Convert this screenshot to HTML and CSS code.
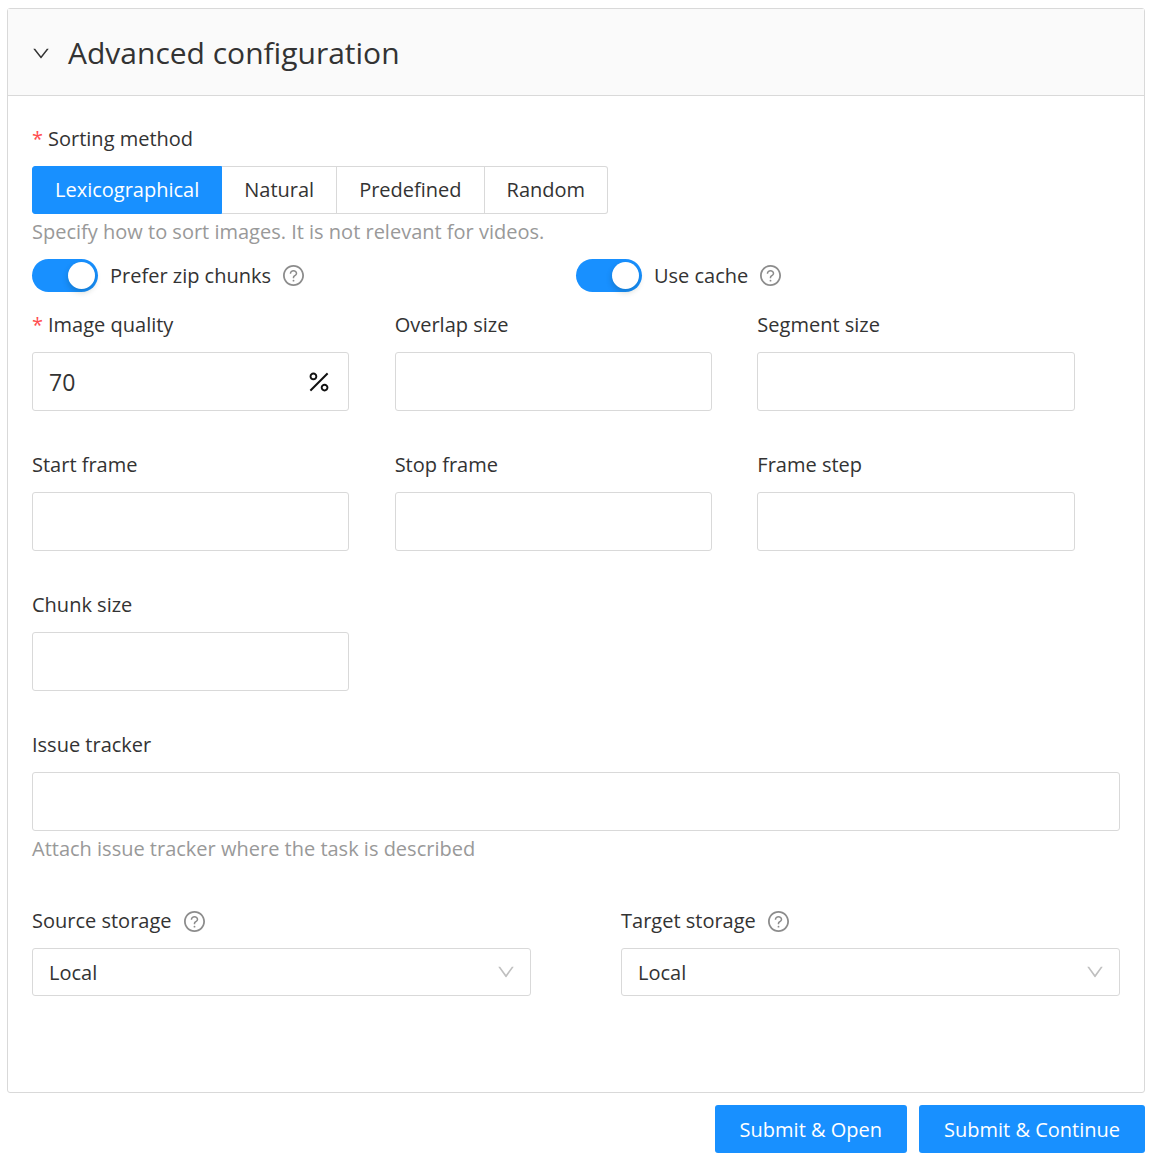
FILE: index.html
```html
<!DOCTYPE html>
<html lang="en">
<head>
<meta charset="utf-8">
<meta name="viewport" content="width=device-width, initial-scale=1">
<title>Advanced configuration</title>
<link rel="stylesheet" href="styles.css">
</head>
<body>
<svg class="sprite" aria-hidden="true">
  <symbol id="down" viewBox="64 64 896 896"><path d="M884 256h-75c-5.100 0-9.900 2.500-12.900 6.600L512 654.200 227.900 262.600c-3-4.100-7.800-6.600-12.900-6.600h-75c-6.500 0-10.300 7.400-6.500 12.700l352.600 486.100c12.800 17.600 39 17.600 51.700 0l352.600-486.100c3.900-5.300.1-12.700-6.400-12.700z"/></symbol>
  <symbol id="right" viewBox="64 64 896 896"><path d="M765.700 486.800L314.900 134.700A7.970 7.970 0 00302 141v77.300c0 4.900 2.300 9.600 6.100 12.600l360 281.100-360 281.100c-3.900 3-6.100 7.700-6.100 12.600V883c0 6.700 7.700 10.400 12.900 6.300l450.800-352.100a31.960 31.960 0 000-50.400z"/></symbol>
  <symbol id="question" viewBox="64 64 896 896"><path d="M512 64C264.600 64 64 264.600 64 512s200.600 448 448 448 448-200.600 448-448S759.400 64 512 64zm0 820c-205.400 0-372-166.600-372-372s166.600-372 372-372 372 166.600 372 372-166.600 372-372 372z"/><path d="M623.600 316.700C593.600 290.400 554 276 512 276s-81.600 14.500-111.600 40.700C369.200 344 352 380.700 352 420v7.600c0 4.400 3.600 8 8 8h48c4.400 0 8-3.600 8-8V420c0-44.100 43.100-80 96-80s96 35.900 96 80c0 31.100-22 59.600-56.100 72.700-21.200 8.100-39.200 22.300-52.100 40.900-13.100 19-19.900 41.800-19.900 64.900V620c0 4.400 3.600 8 8 8h48c4.400 0 8-3.600 8-8v-22.700a48.300 48.300 0 0130.900-44.800c59-22.700 97.100-74.700 97.100-132.500.1-39.300-17.100-76-48.300-103.300zM472 732a40 40 0 1080 0 40 40 0 10-80 0z"/></symbol>
  <symbol id="percent" viewBox="64 64 896 896"><path d="M855.700 210.800l-42.400-42.400a8.030 8.030 0 00-11.300 0L168.300 801.900a8.030 8.030 0 000 11.300l42.400 42.400c3.100 3.100 8.200 3.100 11.300 0L855.600 222c3.200-3 3.200-8.100.1-11.200zM304 448c79.400 0 144-64.600 144-144s-64.600-144-144-144-144 64.600-144 144 64.600 144 144 144zm0-216c39.700 0 72 32.300 72 72s-32.300 72-72 72-72-32.300-72-72 32.300-72 72-72zm416 344c-79.400 0-144 64.600-144 144s64.600 144 144 144 144-64.600 144-144-64.600-144-144-144zm0 216c-39.700 0-72-32.300-72-72s32.300-72 72-72 72 32.300 72 72-32.300 72-72 72z"/></symbol>
</svg>
<form class="page">
  <section class="panel">
    <h2 class="panel-header">
      <button class="panel-toggle" type="button" aria-expanded="true" aria-controls="advanced">
        <svg class="icon icon-caret" aria-hidden="true"><use href="#right"/></svg>
        <span>Advanced configuration</span>
      </button>
    </h2>
    <div class="panel-body" id="advanced">
      <fieldset class="field sorting">
        <legend class="label required">Sorting method</legend>
        <div class="radio-group">
          <label class="radio"><input type="radio" name="sorting" value="lexicographical" checked>Lexicographical</label>
          <label class="radio"><input type="radio" name="sorting" value="natural">Natural</label>
          <label class="radio"><input type="radio" name="sorting" value="predefined">Predefined</label>
          <label class="radio"><input type="radio" name="sorting" value="random">Random</label>
        </div>
        <p class="hint">Specify how to sort images. It is not relevant for videos.</p>
      </fieldset>

      <div class="switches">
        <div class="switch-row">
          <input class="switch" type="checkbox" role="switch" id="zip" checked>
          <label for="zip">Prefer zip chunks</label>
          <svg class="icon icon-help" aria-hidden="true"><use href="#question"/></svg>
        </div>
        <div class="switch-row">
          <input class="switch" type="checkbox" role="switch" id="cache" checked>
          <label for="cache">Use cache</label>
          <svg class="icon icon-help" aria-hidden="true"><use href="#question"/></svg>
        </div>
      </div>

      <div class="fields">
        <div class="field">
          <label class="label required" for="quality">Image quality</label>
          <div class="control">
            <input class="control-input" type="text" inputmode="numeric" id="quality" value="70">
            <svg class="icon icon-percent" aria-hidden="true"><use href="#percent"/></svg>
          </div>
        </div>
        <div class="field">
          <label class="label" for="overlap">Overlap size</label>
          <div class="control"><input class="control-input" type="text" id="overlap"></div>
        </div>
        <div class="field">
          <label class="label" for="segment">Segment size</label>
          <div class="control"><input class="control-input" type="text" id="segment"></div>
        </div>
        <div class="field">
          <label class="label" for="start">Start frame</label>
          <div class="control"><input class="control-input" type="text" id="start"></div>
        </div>
        <div class="field">
          <label class="label" for="stop">Stop frame</label>
          <div class="control"><input class="control-input" type="text" id="stop"></div>
        </div>
        <div class="field">
          <label class="label" for="step">Frame step</label>
          <div class="control"><input class="control-input" type="text" id="step"></div>
        </div>
        <div class="field">
          <label class="label" for="chunk">Chunk size</label>
          <div class="control"><input class="control-input" type="text" id="chunk"></div>
        </div>
      </div>

      <div class="field tracker">
        <label class="label" for="tracker">Issue tracker</label>
        <div class="control"><input class="control-input" type="text" id="tracker"></div>
        <p class="hint">Attach issue tracker where the task is described</p>
      </div>

      <div class="storages">
        <div class="field">
          <div class="label label-help">
            <label for="source">Source storage</label>
            <svg class="icon icon-help" aria-hidden="true"><use href="#question"/></svg>
          </div>
          <div class="select">
            <select id="source"><option>Local</option><option>Cloud storage</option></select>
            <svg class="icon icon-arrow" aria-hidden="true"><use href="#down"/></svg>
          </div>
        </div>
        <div class="field">
          <div class="label label-help">
            <label for="target">Target storage</label>
            <svg class="icon icon-help" aria-hidden="true"><use href="#question"/></svg>
          </div>
          <div class="select">
            <select id="target"><option>Local</option><option>Cloud storage</option></select>
            <svg class="icon icon-arrow" aria-hidden="true"><use href="#down"/></svg>
          </div>
        </div>
      </div>
    </div>
  </section>
  <div class="actions">
    <button class="button" type="submit">Submit &amp; Open</button>
    <button class="button" type="submit">Submit &amp; Continue</button>
  </div>
</form>
</body>
</html>
```
FILE: styles.css
```css
:root {
  --primary: #1890ff;
  --border: #d9d9d9;
  --text: #333;
  --muted: #999;
}

* {
  box-sizing: border-box;
}

body {
  margin: 0;
  background: #fff;
  color: var(--text);
  font: 20px/30px "Open Sans", "Noto Sans", sans-serif;
}

button,
input,
select {
  margin: 0;
  color: inherit;
  font: inherit;
}

.sprite {
  display: none;
}

.icon {
  flex: none;
  fill: currentColor;
}

.page {
  padding: 8px 7px 6px;
}

.panel {
  border: 1px solid var(--border);
  border-radius: 3px;
}

.panel-header {
  margin: 0;
  border-bottom: 1px solid var(--border);
  background: #fafafa;
  font-size: 30px;
  font-weight: 400;
}

.panel-toggle {
  display: flex;
  align-items: center;
  gap: 18px;
  width: 100%;
  padding: 22px 24px 20px;
  border: 0;
  background: none;
  line-height: 44px;
  text-align: left;
  cursor: pointer;
}

.icon-caret {
  width: 18px;
  height: 18px;
}

[aria-expanded="true"] .icon-caret {
  transform: rotate(90deg);
}

.panel-body {
  padding: 28px 24px 96px;
}

.field {
  min-width: 0;
  margin: 0;
  padding: 0;
  border: 0;
}

.label {
  display: block;
  margin-bottom: 12px;
  padding: 0;
}

.required::before {
  content: "*";
  margin-right: 5px;
  color: #ff4d4f;
}

.label-help {
  display: flex;
  align-items: center;
  gap: 12px;
}

.icon-help {
  width: 21px;
  height: 21px;
  color: #8c8c8c;
}

.hint {
  margin: 3px 0 0;
  color: var(--muted);
}

.radio-group {
  display: flex;
}

.radio {
  position: relative;
  height: 48px;
  padding: 0 22px;
  border: 1px solid var(--border);
  border-left-width: 0;
  line-height: 46px;
  cursor: pointer;
}

.radio:first-child {
  border-left-width: 1px;
  border-radius: 3px 0 0 3px;
}

.radio:last-child {
  border-radius: 0 3px 3px 0;
}

.radio:has(:checked) {
  border-color: var(--primary);
  background: var(--primary);
  color: #fff;
}

.radio input {
  position: absolute;
  inset: 0;
  opacity: 0;
}

.switches {
  display: grid;
  grid-template-columns: 1fr 1fr;
  margin: 12px 0 18px;
}

.switch-row {
  display: flex;
  align-items: center;
  gap: 12px;
}

.switch {
  display: flex;
  align-items: center;
  width: 66px;
  height: 33px;
  padding: 3px;
  border-radius: 17px;
  background: #bfbfbf;
  appearance: none;
  cursor: pointer;
}

.switch::before {
  content: "";
  width: 27px;
  height: 27px;
  border-radius: 50%;
  background: #fff;
  box-shadow: 0 3px 6px rgba(0, 35, 11, 0.2);
}

.switch:checked {
  justify-content: flex-end;
  background: var(--primary);
}

.fields {
  display: grid;
  grid-template-columns: repeat(3, 1fr);
  row-gap: 39px;
}

.fields .field {
  width: 87.5%;
}

.control {
  display: flex;
  align-items: center;
  height: 59px;
  padding: 0 17px 0 16px;
  border: 1px solid var(--border);
  border-radius: 3px;
}

.control-input {
  flex: 1;
  min-width: 0;
  padding: 0;
  border: 0;
  outline: 0;
  background: none;
  font-size: 23px;
}

.icon-percent {
  width: 24px;
  height: 24px;
  color: #111;
}

.tracker {
  margin: 39px 0 42px;
}

.storages {
  display: grid;
  grid-template-columns: 1fr 1fr;
  column-gap: 90px;
}

.select {
  display: grid;
  align-items: center;
}

.select > * {
  grid-area: 1 / 1;
}

.select select {
  width: 100%;
  height: 48px;
  padding: 2px 16px 0;
  border: 1px solid var(--border);
  border-radius: 3px;
  background: #fff;
  appearance: none;
}

.icon-arrow {
  justify-self: end;
  width: 18px;
  height: 18px;
  margin-right: 16px;
  color: #bfbfbf;
  pointer-events: none;
}

.actions {
  display: flex;
  justify-content: flex-end;
  gap: 12px;
  margin-top: 12px;
}

.button {
  height: 48px;
  padding: 2px 25px 0;
  border: 0;
  border-radius: 3px;
  background: var(--primary);
  color: #fff;
  cursor: pointer;
}
```
